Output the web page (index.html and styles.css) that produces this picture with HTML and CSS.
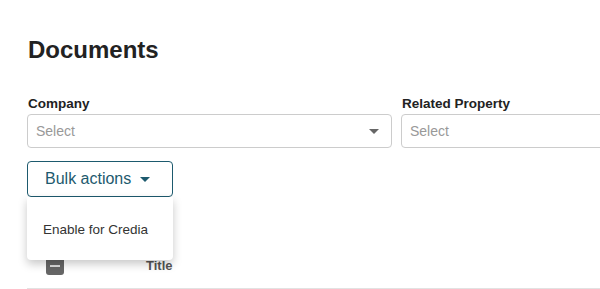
FILE: index.html
```html
<!DOCTYPE html>
<html>
<head>
<meta charset="utf-8">
<link rel="stylesheet" href="styles.css">
</head>
<body>
<div class="page">
  <h1 class="title">Documents</h1>
  <div class="filters">
    <div class="field">
      <label class="label">Company</label>
      <div class="select">
        <span class="placeholder">Select</span>
        <span class="caret"></span>
      </div>
    </div>
    <div class="field">
      <label class="label">Related Property</label>
      <div class="select">
        <span class="placeholder">Select</span>
        <span class="caret"></span>
      </div>
    </div>
  </div>
  <div class="bulk">
    <button class="bulk-btn">Bulk actions <span class="bulk-caret"></span></button>
    <div class="menu">
      <div class="menu-item">Enable for Credia</div>
    </div>
  </div>
  <div class="thead">
    <div class="cell-check"><span class="checkbox"><span class="minus"></span></span></div>
    <div class="cell-title">Title</div>
  </div>
</div>
</body>
</html>
```
FILE: styles.css
```css
html, body {
  margin: 0;
  padding: 0;
  background: #fff;
  overflow: hidden;
  font-family: "Liberation Sans", Arial, sans-serif;
  color: #333;
}
.page {
  padding-left: 27px;
  width: 900px;
}
.title {
  margin: 0;
  padding-top: 36px;
  font-size: 24px;
  line-height: 28px;
  font-weight: bold;
  color: #222;
  padding-left: 1px;
}
.filters {
  display: flex;
  gap: 9px;
  margin-top: 32px;
}
.field {
  display: flex;
  flex-direction: column;
  gap: 2px;
  width: 365px;
}
.label {
  font-size: 13.5px;
  line-height: 16px;
  font-weight: bold;
  color: #222;
  padding-left: 1px;
}
.select {
  box-sizing: border-box;
  height: 34px;
  border: 1px solid #ccc;
  border-radius: 4px;
  display: flex;
  align-items: center;
  justify-content: space-between;
  padding: 0 12px 0 8px;
}
.placeholder {
  font-size: 14px;
  color: #999;
}
.caret {
  width: 0;
  height: 0;
  border-left: 5px solid transparent;
  border-right: 5px solid transparent;
  border-top: 5px solid #666;
}
.bulk {
  position: relative;
  margin-top: 13px;
  width: 146px;
}
.bulk-btn {
  box-sizing: border-box;
  width: 146px;
  height: 36px;
  border: 1px solid #1d5a6e;
  border-radius: 4px;
  background: #fff;
  color: #1d5a6e;
  font-family: "Liberation Sans", Arial, sans-serif;
  font-size: 16px;
  padding: 0 0 0 17px;
  display: flex;
  align-items: center;
  gap: 9px;
  cursor: pointer;
}
.bulk-caret {
  width: 0;
  height: 0;
  border-left: 5px solid transparent;
  border-right: 5px solid transparent;
  border-top: 5px solid #1d5a6e;
}
.menu {
  position: absolute;
  left: 0;
  top: 36px;
  width: 146px;
  height: 63px;
  background: #fff;
  border-radius: 0 0 4px 4px;
  box-shadow: 0 4px 10px rgba(0, 0, 0, 0.22);
  display: flex;
  align-items: center;
  padding-top: 2px;
  box-sizing: border-box;
  z-index: 2;
}
.menu-item {
  padding-left: 16px;
  font-size: 13.5px;
  color: #333;
}
.thead {
  margin-top: 48px;
  height: 44px;
  box-sizing: border-box;
  padding-bottom: 2px;
  border-bottom: 1px solid #e2e2e2;
  display: flex;
  align-items: center;
  width: 600px;
}
.cell-check {
  box-sizing: border-box;
  width: 119px;
  padding-left: 19px;
  display: flex;
  align-items: center;
}
.checkbox {
  width: 18px;
  height: 18px;
  border-radius: 3px;
  background: #666;
  display: flex;
  align-items: center;
  justify-content: center;
}
.minus {
  width: 10px;
  height: 2px;
  background: #ddd;
}
.cell-title {
  font-size: 13px;
  font-weight: bold;
  color: #555;
}
```
